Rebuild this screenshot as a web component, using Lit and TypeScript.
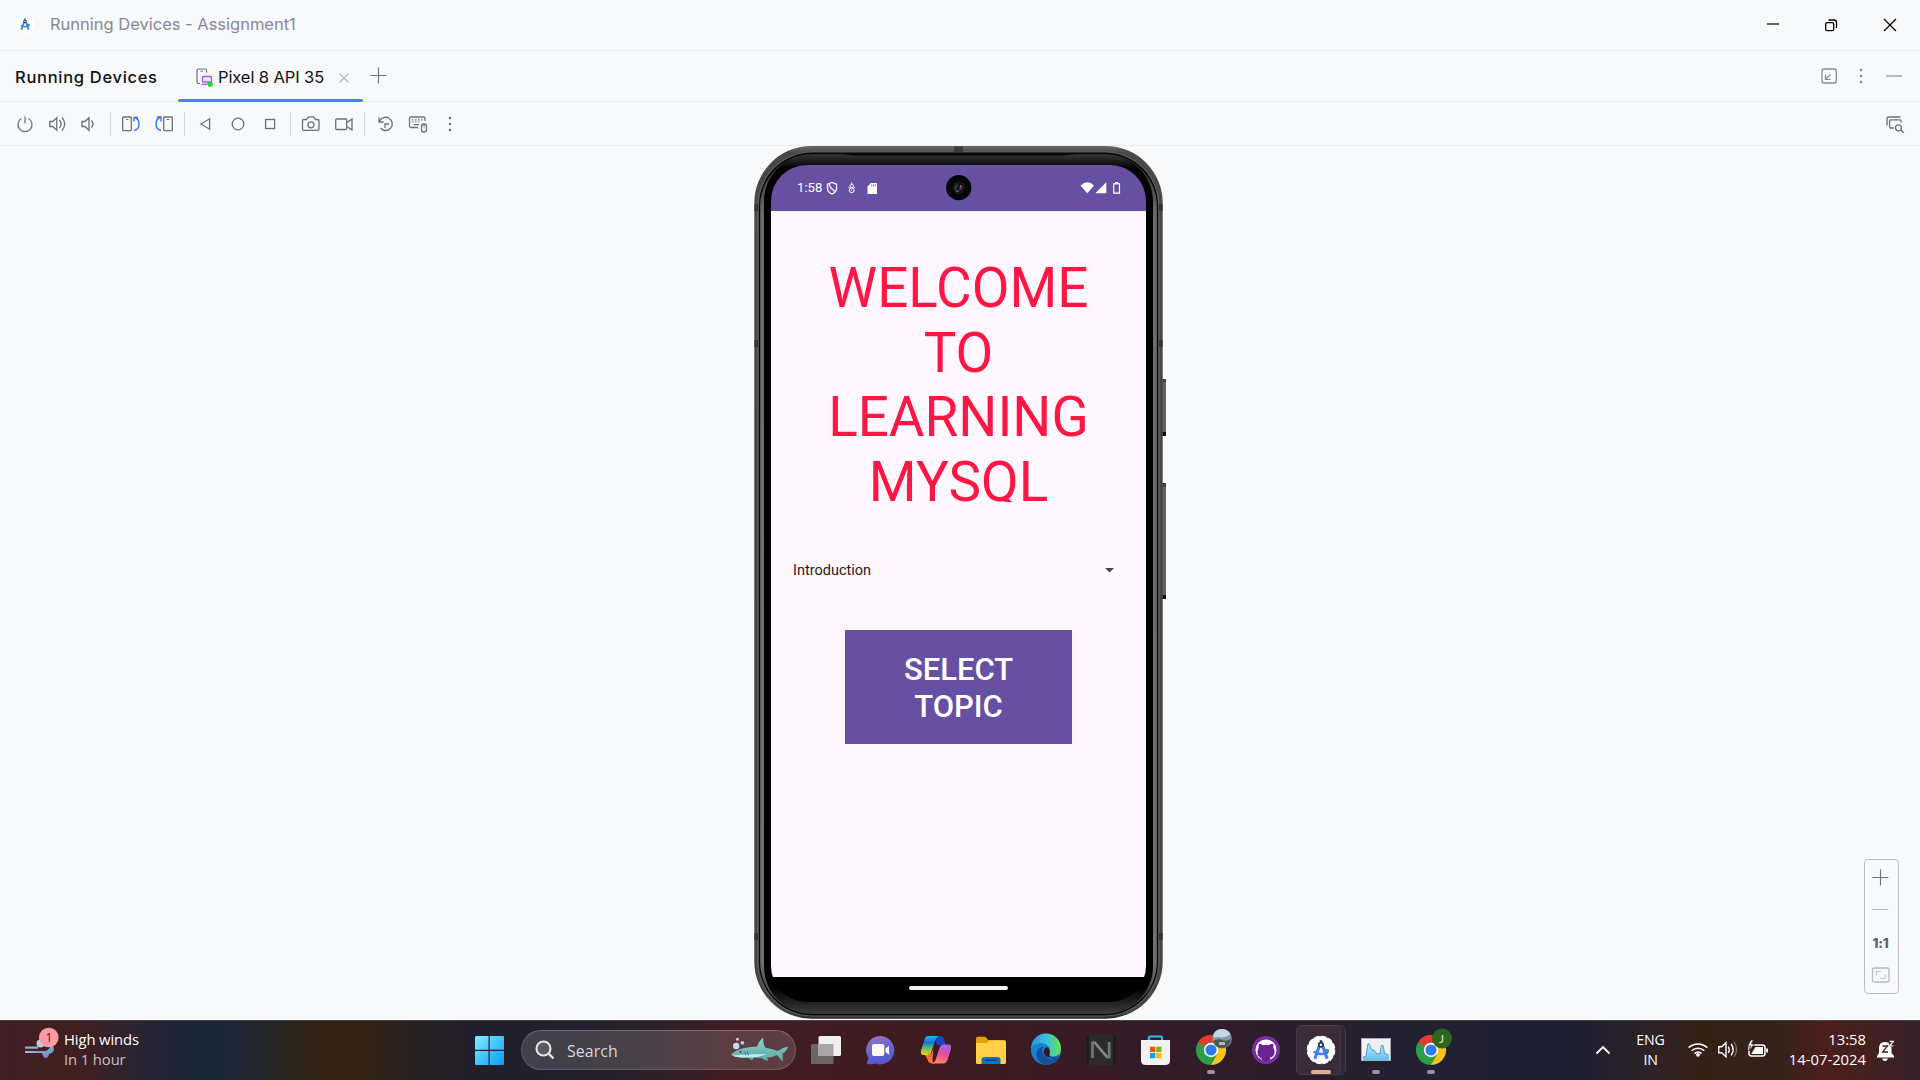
import { LitElement, html, svg, css } from "lit";
import { customElement } from "lit/decorators.js";

// Icons are drawn in window coordinates; each slot shows its own part of the window.
const art = (x: number, y: number, w: number, h: number, body: unknown) =>
  html`<svg class="art" width=${w} height=${h} viewBox="${x} ${y} ${w} ${h}" fill="none">${body}</svg>`;

const bar = (x: number, w: number, body: unknown) => art(x, 102, w, 43, body);
const task = (x: number, w: number, body: unknown) => art(x, 1020, w, 60, body);
const app = (x: number, w: number, body: unknown) => art(x, 1022, w, 60, body);

const studioMark = (cx: number, cy: number, k: number) => svg`
  <g transform="translate(${cx} ${cy}) scale(${k})">
    <path d="M2 -2 L8.5 -1 L7 3.500 L3 3Z" fill="#34a853"/>
    <path d="M-1.200 -6 L-6.300 8.500 M1.200 -6 L6.300 8.500" stroke="#3f82f5" stroke-width="3.200"/>
    <path d="M-7.500 1 Q0 6.200 7.500 1" stroke="#3f82f5" stroke-width="2.400"/>
    <path d="M-1.300 -10.500 h2.600 v2 h-2.600z" fill="#1d3a5c"/>
    <circle cx="0" cy="-5.800" r="2.200" fill="#fff" stroke="#1d3a5c" stroke-width="1.800"/>
  </g>`;

const chrome = (cx: number) => svg`
  <g transform="translate(${cx} 1052) scale(.94)">
    <path d="M0 0 L-13.860 -8 A16 16 0 0 1 13.860 -8Z" fill="#e33b2e"/>
    <path d="M0 0 L13.860 -8 A16 16 0 0 1 0 16Z" fill="#fcc31e"/>
    <path d="M0 0 L0 16 A16 16 0 0 1 -13.860 -8Z" fill="#2b9e47"/>
    <path d="M0 -8 H13.860 L6.900 4Z" fill="#fcc31e"/>
    <path d="M6.900 4 L0 16 L-2 7Z" fill="#2b9e47"/>
    <path d="M-6.900 4 L-13.860 -8 L-2 -7.500Z" fill="#2b9e47"/>
    <path d="M-13.860 -8 A16 16 0 0 1 13.860 -8 H0 A8 8 0 0 0 -7 -4Z" fill="#e33b2e"/>
    <circle r="7.600" fill="#fff"/><circle r="5.900" fill="#2f7bea"/>
  </g>`;

@customElement("phone-frame")
class PhoneFrame extends LitElement {
  static styles = css`
    :host { display: block; position: relative; width: 412px; height: 874px; font-family: Roboto, sans-serif; }
    .body { position: absolute; left: 0; top: 0; display: block; }
    .screen { position: relative; box-sizing: border-box; margin-left: 17px; width: 375px; height: 837px; top: 19px;
      border-radius: 36px; overflow: hidden; background: #000; display: flex; flex-direction: column; }
    .status { height: 46px; background: #6750a3; display: flex; flex: none; color: #fff; box-sizing: border-box; }
    .time { width: 52px; box-sizing: border-box; padding-left: 26px; font-size: 13.2px; line-height: 46px; white-space: nowrap; }
    .art { display: block; flex: none; }
    .content { height: 766px; flex: none; background: #fef7ff; display: flex; flex-direction: column; align-items: center; }
    .title { margin-top: 45px; height: 246px; overflow: hidden; color: #ff1744; font-size: 54.8px; line-height: 64.700px; text-align: center; flex: none; }
    .title span { display: block; }
    .spinner { margin-top: 48px; width: 375px; height: 40px; display: flex; align-items: center; justify-content: space-between;
      box-sizing: border-box; padding: 0 32px 0 22px; color: #1d1b20; font-size: 14.5px; flex: none; }
    .select { margin-top: 40px; width: 227px; height: 114px; background: #6750a3; color: #fff; font-weight: 500; font-size: 31px;
      line-height: 36.600px; text-align: center; padding: 22px 0 0; box-sizing: border-box; flex: none; }
    .select span { display: block; }
    .nav { flex: 1; display: flex; justify-content: center; padding-top: 9px; }
    .handle { width: 99px; height: 4px; border-radius: 2px; background: #f0f2ee; }
  `;
  render() {
    return html`
      <svg class="body" width="412" height="874" viewBox="754 146 412 874">
        <defs>
          <linearGradient id="rim" x1="0" y1="0" x2="0" y2="1"><stop offset="0" stop-color="#6a6b69"/><stop offset=".008" stop-color="#474847"/><stop offset=".99" stop-color="#454545"/><stop offset="1" stop-color="#2b2b2b"/></linearGradient>
          <linearGradient id="glass" x1="0" y1="0" x2="0" y2="1"><stop offset="0" stop-color="#353535"/><stop offset=".015" stop-color="#050505"/><stop offset=".06" stop-color="#000"/><stop offset=".97" stop-color="#000"/><stop offset="1" stop-color="#3b3b3b"/></linearGradient>
          <linearGradient id="edge" x1="0" y1="0" x2="0" y2="1"><stop offset="0" stop-color="#222"/><stop offset=".07" stop-color="#6c6c6c"/><stop offset=".94" stop-color="#707070"/><stop offset="1" stop-color="#333"/></linearGradient>
        </defs>
        <g fill="#626262"><rect x="1162" y="379" width="4" height="56"/><rect x="1162" y="483" width="4" height="115"/></g>
        <path d="M1162 432h4v4h-4zM1162 595h4v4h-4z" fill="#111"/><path d="M1162 379h4v3h-4zM1162 483h4v4h-4z" fill="#444"/>
        <rect x="754.300" y="146" width="408.400" height="872.700" rx="57" fill="url(#rim)"/>
        <rect x="757.800" y="152" width="401.400" height="864" rx="54" fill="none" stroke="#727272" stroke-width="1" opacity=".65"/>
        <rect x="759" y="152.600" width="399" height="862.600" rx="53" fill="#080808"/>
        <rect x="760.200" y="154" width="396.600" height="860" rx="52" fill="url(#edge)"/>
        <rect x="764" y="154.500" width="389" height="859" rx="47" fill="url(#glass)"/>
        <path d="M841 154.300H1077L1062 155.500H855Z" fill="#000"/>
        <path d="M954 146.500h9v5.500h-9z" fill="#3c3c3c"/>
        <g fill="#353535"><rect x="754.500" y="204" width="3.500" height="7"/><rect x="1159" y="204" width="3.500" height="7"/><rect x="754.500" y="340" width="3.500" height="7"/><rect x="1159" y="340" width="3.500" height="7"/><rect x="754.500" y="933" width="3.500" height="7"/><rect x="1159" y="933" width="3.500" height="7"/></g>
      </svg>
      <div class="screen">
        <div class="status">
          <div class="time">1:58</div>
          <svg class="art" width="323" height="46" viewBox="823 165 323 46" fill="none">
            <path d="M832 182.500 L827.500 184.200 V188.500 Q827.500 192 832 194 Q836.500 192 836.500 188.500 V184.200Z" stroke="#fff" stroke-width="1.300"/>
            <path d="M829.500 184 Q829.500 188 833 189.500 L834.500 191.500" stroke="#fff" stroke-width="1.300"/>
            <circle cx="851.700" cy="186" r="1.700" stroke="#fff" stroke-width="1"/><circle cx="851.700" cy="190.300" r="2.400" stroke="#fff" stroke-width="1"/><path d="M851.700 182.500v1.500M851.700 189.500v1.600M848.300 187.200l1.600 1M855.100 187.200l-1.600 1" stroke="#fff" stroke-width=".9"/>
            <path d="M871 183 H876.500 Q877 183 877 183.800 V193.500 Q877 194 876.300 194 H868.200 Q867.500 194 867.500 193.400 V186.500Z" fill="#fff"/><path d="M871.800 184.300v2M873.600 184.300v2M875.300 184.300v2" stroke="#6750a3" stroke-width=".8"/>
            <circle cx="958.700" cy="187.700" r="12.600" fill="#050505"/><circle cx="958.700" cy="187.700" r="6.500" fill="#141414"/>
            <path d="M954.500 190 a5 5 0 0 1 3.500 -6.500 l-1 4z" fill="#303c54"/><path d="M960 185 q3.500 1 2 4 l-3 1.500z" fill="#54384f"/><path d="M955.500 190.500l3 1" stroke="#5f8d95" stroke-width="1.300"/><path d="M960 185.600l1.300 1" stroke="#c6a5c6"/>
            <path d="M1080.600 185.500 Q1087.300 179 1094 185.500 L1087.300 193.200Z" fill="#fff"/>
            <path d="M1095.300 193.300 L1106.300 182.300 V193.300Z" fill="#fff"/>
            <path d="M1115 182h3v1.300h-3z" fill="#fff"/><rect x="1113.700" y="183.800" width="5.800" height="9.400" stroke="#fff" stroke-width="1.200"/><path d="M1114.500 192.300h4.200" stroke="#f2a6a0"/>
          </svg>
        </div>
        <div class="content">
          <div class="title"><span>WELCOME</span><span>TO</span><span>LEARNING</span><span>MYSQL</span></div>
          <div class="spinner"><span>Introduction</span><svg class="art" width="9" height="5" viewBox="0 0 9 5"><path d="M0 0h9L4.500 4.600z" fill="#49454f"/></svg></div>
          <div class="select"><span>SELECT</span><span>TOPIC</span></div>
        </div>
        <div class="nav"><div class="handle"></div></div>
      </div>`;
  }
}

@customElement("app-root")
class AppRoot extends LitElement {
  static styles = css`
    :host { display: flex; flex-direction: column; width: 1920px; height: 1080px; overflow: hidden; background: #f7f9fb;
      font-family: Inter, sans-serif; white-space: nowrap; }
    .art { display: block; flex: none; }
    .row { display: flex; flex: none; align-items: center; box-sizing: border-box; border-bottom: 1px solid #ebecf0; }
    .titlebar { height: 51px; }
    .caption { color: #878a99; font-size: 16.5px; letter-spacing: -.01px; line-height: 49px; height: 50px; }
    .grow { flex: 1; }
    .tabs { height: 51px; color: #111; font-size: 16.5px; }
    .heading { width: 178px; box-sizing: border-box; padding: 2px 0 0 15px; font-weight: 500; letter-spacing: .7px; }
    .tab { width: 185px; height: 51px; display: flex; align-items: center; position: relative; }
    .tab .underline { position: absolute; left: 0; right: 0; bottom: 0; height: 3px; border-radius: 2px; background: #4682fa; }
    .name { width: 112px; padding-top: 2px; letter-spacing: -.1px; }
    .tools { height: 44px; }
    .sep { width: 1px; height: 24px; background: #d6d7de; flex: none; }
    .stage { flex: 1; display: flex; min-height: 0; }
    .device { margin-left: 754px; flex: none; }
    .zoom { margin: 713px 21px 0 0; width: 35px; height: 135px; box-sizing: border-box; border: 1px solid #bcbdc4; border-radius: 4px;
      display: flex; flex-direction: column; align-items: center; }
    .ratio { font-size: 13.5px; font-weight: 800; color: #5f6065; height: 33px; line-height: 34px; letter-spacing: -.3px; padding-right: 2px; }
    .taskbar { height: 60px; flex: none; display: flex; color: #fff; font-family: "Open Sans", "Noto Sans", sans-serif; box-shadow: inset 0 1px #4c4346;
      background: linear-gradient(90deg, #3e1f22 0, #421f1f 75px, #2b2331 135px, #192539 190px, #1c2737 235px, #29251f 285px, #342215 325px, #332215 370px,
        #282022 410px, #211f2d 475px, #231f2c 580px, #2d2029 660px, #421c20 735px, #3e1b20 920px, #371b27 1120px, #2c1d2b 1270px, #222031 1420px,
        #1e1e31 1575px, #2b2229 1640px, #342115 1700px, #34211a 1770px, #4b1f1c 1825px, #42201f 1870px, #36212a 1920px); }
    .weather { width: 411px; padding-top: 9px; font-size: 14.8px; line-height: 20px; box-sizing: border-box; letter-spacing: -.1px; }
    .soft { color: #c9c0c1; }
    .search { margin: 10px 9px 0 8px; width: 275px; height: 40px; box-sizing: border-box; border-radius: 20px; flex: none;
      border: 1px solid #ffffff22; border-top-color: #ffffff38; background: #ffffff26; display: flex; align-items: center; color: #d9d5d8; }
    .hint { font-size: 15.9px; padding-top: 2px; letter-spacing: .1px; }
    .lang { width: 45px; text-align: center; font-size: 14.2px; line-height: 20px; padding: 10px 2px 0 0; letter-spacing: -.2px; box-sizing: border-box; }
    .clock { width: 94px; text-align: right; font-size: 14.8px; line-height: 20px; padding-top: 9px; }
    .clock div, .lang div, .weather div { height: 20px; }
    .badge { font: 12px Lato, sans-serif; fill: #dfe8da; }
    .count { font: 12px "Open Sans", sans-serif; fill: #3b1a20; }
  `;
  render() {
    const g = "#6c707e";
    const b = "#3574f0";
    const st = (d: string, c = g, w = 1.3) => svg`<path d=${d} stroke=${c} stroke-width=${w}/>`;
    return html`
      <div class="row titlebar">
        ${art(0, 0, 50, 50, svg`<circle cx="25" cy="24.500" r="9" fill="#fff"/>${studioMark(25, 24.7, 0.58)}`)}
        <div class="caption">Running Devices - Assignment1</div>
        <div class="grow"></div>
        ${art(1744, 0, 58, 50, st("M1767 24h12", "#000", 1.2))}
        ${art(1802, 0, 58, 50, svg`<rect x="1825.700" y="22.700" width="8" height="8" rx="1.500" stroke="#000" stroke-width="1.300"/>${st("M1828.500 20h5.500q2.500 0 2.500 2.500v5.500", "#000", 1.3)}`)}
        ${art(1860, 0, 60, 50, st("M1884 19l12 12M1896 19l-12 12", "#000", 1.2))}
      </div>
      <div class="row tabs">
        <div class="heading">Running Devices</div>
        <div class="tab">
          ${art(178, 51, 40, 50, svg`
            <path d="M200 83.500h-1.500q-1.500 0-1.500-1.500V70.500q0-1.500 1.500-1.500h6.500q1.500 0 1.500 1.500v2" stroke=${g} stroke-width="1.200"/><path d="M200.500 71.200h2.500" stroke=${g}/>
            <rect x="202.500" y="76.500" width="9" height="5.500" rx=".8" fill="#f3ebff" stroke="#9b5cf5" stroke-width="1.300"/><path d="M201.500 84.300h7" stroke="#9b5cf5" stroke-width="1.300"/><circle cx="210.200" cy="84.200" r="2.600" fill="#1fdc3c"/>`)}
          <div class="name">Pixel 8 API 35</div>
          ${art(330, 51, 33, 50, st("M339.500 73.500l9 9M348.500 73.500l-9 9", "#b3b6c3", 1.2))}
          <div class="underline"></div>
        </div>
        ${art(363, 51, 40, 50, st("M370.500 75.500h16M378.500 67.500v16", g, 1.1))}
        <div class="grow"></div>
        ${art(1810, 51, 35, 50, svg`<rect x="1822" y="69" width="14.300" height="14" rx="2" stroke="#868996" stroke-width="1.300"/>${st("M1825.500 74.500v5h5M1826 79l4.500-4.500", "#868996", 1.2)}`)}
        ${art(1845, 51, 30, 50, svg`<g fill="#7a7e8c"><circle cx="1861" cy="70" r="1.200"/><circle cx="1861" cy="76" r="1.200"/><circle cx="1861" cy="82" r="1.200"/></g>`)}
        ${art(1875, 51, 45, 50, st("M1886 76h16", "#a8abb6", 1.6))}
      </div>
      <div class="row tools">
        ${bar(0, 41, st("M21.500 118.500a7 7 0 1 0 7 0M25 116.500v7"))}
        ${bar(41, 34, st("M49.800 121.500h3l4-3.700v12.400l-4-3.700h-3zM59.500 120q3 4 0 8M62 117.500q5.500 6.500 0 13"))}
        ${bar(75, 35, st("M82 121.500h3l4-3.700v12.400l-4-3.700h-3zM91.300 120.500q3.500 3.500 0 7"))}
        <div class="sep"></div>
        ${bar(111, 37, svg`<rect x="122.700" y="117" width="8.600" height="13.700" rx=".8" stroke=${g} stroke-width="1.300"/>${st("M126 119.500h2.500", g, 1)}${st("M134 130.500q5-1 5-6.500 0-5-4-6.500M134 121.500v-4h4", b, 1.4)}`)}
        ${bar(148, 36, svg`<rect x="163.700" y="117" width="8.600" height="13.700" rx=".8" stroke=${g} stroke-width="1.300"/>${st("M166.700 119.500h2.500", g, 1)}${st("M161 130.500q-5-1-5-6.500 0-5 4-6.500M157 117h4v4.500", b, 1.4)}`)}
        <div class="sep"></div>
        ${bar(185, 36, st("M209.600 118.800v10.400l-8.600-5.200z"))}
        ${bar(221, 34, svg`<circle cx="238" cy="124" r="5.800" stroke=${g} stroke-width="1.300"/>`)}
        ${bar(255, 35, svg`<rect x="265.600" y="119.500" width="9" height="9" stroke=${g} stroke-width="1.300"/>`)}
        <div class="sep"></div>
        ${bar(291, 37, svg`<path d="M303.800 119.500h2.700l1.800-2.700h5.400l1.800 2.700h2.200q1.300 0 1.300 1.300v8.200q0 1.300-1.300 1.300h-13.900q-1.300 0-1.300-1.300v-8.200q0-1.300 1.300-1.300z" stroke=${g} stroke-width="1.300"/><circle cx="311" cy="124.800" r="3" stroke=${g} stroke-width="1.300"/>`)}
        ${bar(328, 36, svg`<rect x="335.700" y="119" width="11" height="10.500" rx="1" stroke=${g} stroke-width="1.300"/>${st("M347 122.500l5-3.500v11l-5-3.500", g, 1.3)}`)}
        <div class="sep"></div>
        ${bar(365, 38, st("M379 117.500v4.500h4.500M379.500 121.500a6.600 6.600 0 1 1 1 6.500M389 124h-4v4"))}
        ${bar(403, 35, svg`${st("M418 127.500h-7q-1.500 0-1.500-1.500v-7.500q0-1.500 1.500-1.500h12.500q1.500 0 1.500 1.500v2.500")}${st("M412 119.800h1.500M415 119.800h1.500M418 119.800h1.500M421 119.800h1.500M412 122h1.500M415 122h1.500M418 122h1.500M414 124.700h5", g, 1.2)}<rect x="421.500" y="124" width="5" height="8" rx="2.300" stroke=${g} stroke-width="1.300"/>${st("M424 124v3.500", g, 1)}`)}
        ${bar(438, 30, svg`<g fill=${g}><circle cx="450" cy="118" r="1.200"/><circle cx="450" cy="124" r="1.200"/><circle cx="450" cy="130" r="1.200"/></g>`)}
        <div class="grow"></div>
        ${bar(1875, 45, svg`${st("M1887 125.500v-7q0-1.500 1.500-1.500h12M1894 128h-3.500q-.9 0-.9-.9v-6.400q0-.9.9-.9h9.600q.9 0 .9.900v2")}<circle cx="1898.500" cy="127.800" r="3" stroke=${g} stroke-width="1.300"/>${st("M1900.700 130l3 2.800", g, 1.5)}`)}
      </div>
      <div class="stage">
        <phone-frame class="device"></phone-frame>
        <div class="grow"></div>
        <div class="zoom">
          ${art(1865, 860, 33, 34, st("M1872.300 877.500h16M1880.500 869.500v16", g, 1.1))}
          ${art(1865, 894, 33, 32, st("M1872.300 909.500h16", "#b9bbc2", 1.1))}
          <div class="ratio">1:1</div>
          ${art(1865, 959, 33, 33, svg`<rect x="1872.500" y="968" width="16.500" height="14" rx="1.500" stroke="#b9babf" stroke-width="1.300"/>${st("M1876.500 975.500v-4h4.500M1885 974.500v4h-4.500", "#c3c4c9", 1.2)}`)}
        </div>
      </div>
      <div class="taskbar">
        <svg class="art" width="64" height="60" viewBox="0 1020 64 60" fill="none">
          <defs>
            <linearGradient id="wind" x1="0" y1="0" x2="1" y2="1"><stop stop-color="#c4d9f0"/><stop offset="1" stop-color="#4f7fae"/></linearGradient>
          </defs>
          <path d="M25 1047.600h13" stroke="#8fb0d5" stroke-width="2.200"/><circle cx="40.500" cy="1043.500" r="4" fill="#b6cdea"/>
          <path d="M25 1053h17q1 5 4 5 3-1 3-4 5-1 5-5 0-3-3-3-3 5-6 5H25z" fill="url(#wind)"/><path d="M25 1050.500h20" stroke="#3a2730" stroke-width="1.200"/>
          <circle cx="48.800" cy="1037.500" r="9.800" fill="#ff99a4"/><text class="count" x="45.500" y="1042">1</text>
        </svg>
        <div class="weather"><div>High winds</div><div class="soft">In 1 hour</div></div>
        ${task(475, 38, svg`
          <defs><linearGradient id="w" gradientUnits="userSpaceOnUse" x1="475" y1="1036" x2="504" y2="1065"><stop stop-color="#7bf0ff"/><stop offset="1" stop-color="#0a9bf8"/></linearGradient></defs>
          <path d="M476 1036h12.500v13.700H475V1037zM489.700 1036H503q1 0 1 1v12.700h-14.300zM475 1051h13.500v14H476q-1 0-1-1zM489.700 1051H504v13q0 1-1 1h-13.300z" fill="url(#w)"/>`)}
        <div class="search">
          ${art(522, 1030, 45, 40, svg`<circle cx="543.500" cy="1048.500" r="7" stroke="#e6e3e6" stroke-width="2.100" fill="#ffffff22"/><path d="M548.700 1053.700l4.800 4.800" stroke="#e6e3e6" stroke-width="2.400"/>`)}
          <span class="hint">Search</span><div class="grow"></div>
          ${art(731, 1030, 64, 40, svg`
            <defs><linearGradient id="shark" x1="0" y1="0" x2="0" y2="1"><stop stop-color="#8fd0cf"/><stop offset=".6" stop-color="#6fb8b6"/><stop offset="1" stop-color="#5aa5a6"/></linearGradient></defs>
            <path d="M731 1054.500Q735 1050.500 742 1048.500 Q751 1046.500 757 1046.500 Q759 1041 763 1037.500 Q763 1043 765 1047.500 Q773 1049 778 1051 Q782 1047.500 788 1046.500 Q787 1051 782.500 1053.500 Q783 1058 782.500 1061.500 Q779 1057.500 777 1055 Q772 1057.500 767 1057.800 L768.500 1061 Q763.500 1060 761.500 1058 L754 1057.800 L752 1060.500 Q749.500 1058.500 747.500 1057.500 Q737 1058.500 731 1054.500Z" fill="url(#shark)"/>
            <path d="M732 1055.500 Q748 1054 766 1054 Q760 1057.500 748 1057.500 Q738 1058 732 1055.500Z" fill="#b9eeec"/><path d="M744.500 1051.500l1.500 4M747 1051l1.500 4.500" stroke="#2c7479" stroke-width=".8"/><circle cx="740.500" cy="1052" r="1" fill="#7a2b36"/>
            <circle cx="736.200" cy="1046" r="3.200" fill="#c7dcf8"/><circle cx="742.400" cy="1042.800" r="1.900" fill="#b7cff0"/><circle cx="737.400" cy="1039.300" r="1.500" fill="#b7d7ee"/>`)}
        </div>
        ${task(805, 50, svg`<rect x="811" y="1044" width="22.500" height="20" rx="1.500" fill="#6a6664"/><rect x="818.500" y="1036" width="22.500" height="20" rx="1.500" fill="#f0eeee"/><path d="M818.500 1044H833.500V1056H820q-1.500 0-1.500-1.500z" fill="#a9a6a7"/>`)}
        ${task(855, 55, svg`<defs><linearGradient id="chat" x1=".2" y1="0" x2=".5" y2="1"><stop stop-color="#9a6fc0"/><stop offset=".5" stop-color="#6666cf"/><stop offset="1" stop-color="#5058cf"/></linearGradient></defs>
          <path d="M880.700 1036a14.200 14.200 0 1 1-5.500 27.500Q871 1065 866.500 1063.800L868.500 1058A14.200 14.200 0 0 1 880.700 1036z" fill="url(#chat)"/><rect x="872" y="1044" width="12.300" height="12" rx="2" fill="#fff"/><path d="M885.500 1048.500l3.500-2.800v9l-3.500-2.800z" fill="#fff"/>`)}
        ${app(910, 55, svg`
          <defs>
            <linearGradient id="cpa" x1="0" y1="0" x2="0" y2="1"><stop stop-color="#1fb6e8"/><stop offset=".35" stop-color="#1a6fe0"/><stop offset=".6" stop-color="#52b96a"/><stop offset="1" stop-color="#f6d21c"/></linearGradient>
            <linearGradient id="cpb" x1=".6" y1="0" x2=".3" y2="1"><stop stop-color="#a95df0"/><stop offset=".5" stop-color="#ea4f9b"/><stop offset="1" stop-color="#ff8a53"/></linearGradient>
          </defs>
          <path d="M934 1038h6q3 0 4 3l2 6h-9z" fill="#1a43c4"/>
          <path d="M928 1038h11q-3 1-4 5l-3.500 10.500q-1 3.500-4 3.500h-4q-3.500 0-2.300-5l3-9.500q1-4.500 3.800-4.500z" fill="url(#cpa)"/>
          <path d="M943 1065.500h-11q3-1 4-5l3.500-10.500q1-3.500 4-3.500h5q3.500 0 2.300 5l-3 9.500q-1.300 4.500-4.800 4.500z" fill="url(#cpb)"/>
          <path d="M925 1057h3q3 0 4-3l1.500-3.500-1 10q-.5 4 2.500 5h-3q-3.500 0-4.500-4z" fill="#fa7044"/>`)}
        ${app(965, 55, svg`<path d="M976 1040.500q0-1.700 1.700-1.700h7.600l3 3.200H1004q2 0 2 2v5h-30z" fill="#e2a20b"/><path d="M976 1045h10.500l2.500-2.500h15.500q1.500 0 1.500 1.500V1064.500q0 1.500-1.500 1.500h-27q-1.500 0-1.500-1.500z" fill="#ffd148"/><path d="M981.500 1066v-4q0-3 3-3h13q3 0 3 3v4z" fill="#1070bd"/><path d="M985 1062h12" stroke="#0a4574" stroke-width="1.500"/>`)}
        ${app(1020, 55, svg`
          <defs><linearGradient id="eg" x1="0" y1=".3" x2="1" y2=".3"><stop stop-color="#2397dc"/><stop offset=".5" stop-color="#35c1e0"/><stop offset="1" stop-color="#6be04c"/></linearGradient></defs>
          <circle cx="1046" cy="1052" r="15" fill="#1b7fd0"/>
          <path d="M1031 1051A15 15 0 0 1 1061 1050Q1061.500 1058 1053 1058.500 Q1048 1058.500 1049.500 1055Q1051 1047 1043 1045Q1034 1044.500 1031 1051z" fill="url(#eg)"/>
          <path d="M1049.300 1055.500Q1048 1058.800 1053 1059Q1057 1059 1059.500 1057.500Q1055 1067 1045 1067Q1036 1064 1036.500 1055Q1038 1049 1044 1048.500Q1040 1053 1044 1057Q1047 1060.500 1052 1062" fill="#14509a"/>
          <path d="M1049.600 1055.500Q1048 1058.500 1052 1059.500Q1045 1060 1043.500 1054Q1044 1050 1047 1049Q1051 1051.500 1049.600 1055.500z" fill="#32182a"/>`)}
        ${app(1075, 55, svg`<rect x="1086" y="1037" width="30" height="30" rx="4" fill="#1c1c1d"/><rect x="1089" y="1037" width="24" height="30" fill="#2a2b2b"/><path d="M1092.500 1060v-15h2.500l12 14h2.200v-15" stroke="#737373" stroke-width="2.800"/><path d="M1094 1043.500l13 15.500" stroke="#a0a0a0" stroke-width="1"/>`)}
        ${app(1130, 55, svg`<path d="M1149 1043.500v-4q0-1 1-1h11q1 0 1 1v4" stroke="#2bb7ea" stroke-width="2.200"/><path d="M1141 1042h29v20.500q0 4.500-5 4.500h-19q-5 0-5-4.500z" fill="#f2f2f3"/><path d="M1150 1048.700h5.300v5.300h-5.300z" fill="#f25022"/><path d="M1156.200 1048.700h5.300v5.300h-5.300z" fill="#7fba00"/><path d="M1150 1055h5.300v5.300h-5.300z" fill="#00a4ef"/><path d="M1156.200 1055h5.300v5.300h-5.300z" fill="#ffb900"/>`)}
        ${app(1185, 55, svg`${chrome(1211)}
          <circle cx="1222" cy="1040.700" r="9.800" fill="#8496a5"/><path d="M1213.500 1036a9.800 9.800 0 0 1 17 0q-5 4-9 3.500-5-1-8 .5z" fill="#c3d6e6"/><path d="M1213 1043q5-3 9-1t9-1q-1 9-9 9.300-7-.8-9-7.300z" fill="#4c5752"/><path d="M1219 1044h6v3h-6z" fill="#aab3b5"/><rect x="1207" y="1072" width="8" height="4" rx="2" fill="#9c96a0"/>`)}
        ${app(1240, 55, svg`<circle cx="1266" cy="1052" r="14" fill="#7b2da3"/><circle cx="1266" cy="1052" r="10.500" fill="#fff"/><path d="M1261.800 1062v-2.600q-4-.8-4.300-5-.1-3 1.300-4.700-.7-2 .3-4 2.300 0 4 1.500 2.900-.7 5.800 0 1.700-1.500 4-1.500 1 2 .3 4 1.400 1.700 1.300 4.700-.3 4.200-4.300 5v3.100q-4 1.600-8.400-.5z" fill="#6b2393"/><path d="M1257.500 1057q2 .3 2.800 2t2.500 1.200" stroke="#6b2393" stroke-width="1.100"/>`)}
        ${app(1295, 55, svg`<rect x="1330" y="1027.500" width="15.500" height="49" rx="5" fill="#ffffff0c" stroke="#ffffff18"/><rect x="1296.500" y="1027.500" width="43.500" height="49" rx="5" fill="#3a2c39" stroke="#4b3d49"/><circle cx="1321" cy="1052" r="13.700" fill="#fff"/><circle cx="1321" cy="1052" r="13.700" stroke="#fff" stroke-width="1.200" stroke-dasharray="5 2.170"/>${studioMark(1321, 1052.5, 0.98)}<rect x="1311" y="1072" width="20" height="4" rx="2" fill="#dcae98"/>`)}
        ${app(1350, 55, svg`<defs><linearGradient id="perf" x1="0" y1="0" x2="0" y2="1"><stop stop-color="#c9e8f8"/><stop offset="1" stop-color="#5fc3f3"/></linearGradient></defs><rect x="1361.500" y="1040.500" width="29" height="22" fill="#f1f1f3" stroke="#a9adb5"/><path d="M1363 1062V1059l3-1 2-13 1.500 1 2 5 3 1.500 2 3 3.500.500 1.500-8 2 0 1.500 8 4 1V1062z" fill="url(#perf)"/><path d="M1362.500 1059.500l3.500-1.500 2-12.500 1.500 1 2 5 3 1 2 3 3.500.500 1.300-8.500h1.700l1.600 8 4 1" stroke="#4b9bd0" stroke-width="1"/><rect x="1372" y="1072" width="8" height="4" rx="2" fill="#9690a0"/>`)}
        ${app(1405, 55, svg`${chrome(1431)}<circle cx="1442" cy="1040.500" r="10" fill="#2e661f"/><text class="badge" x="1439" y="1045">J</text><rect x="1427" y="1072" width="8" height="4" rx="2" fill="#96909d"/>`)}
        <div class="grow"></div>
        ${task(1586, 43, st("M1596.500 1053.500l6.500-6.500 6.500 6.500", "#fff", 1.8))}
        <div class="lang"><div>ENG</div><div>IN</div></div>
        ${task(1674, 38, svg`${st("M1688.700 1047.700a13.400 13.400 0 0 1 18.600 0M1691.700 1050.800a9 9 0 0 1 12.600 0M1694.500 1053.600a5 5 0 0 1 7 0", "#fff", 1.6)}<circle cx="1698" cy="1054.800" r="1.900" fill="#fff"/>`)}
        ${task(1712, 30, svg`${st("M1718.700 1046.700h3l4.300-4v14l-4.300-4h-3z", "#fff", 1.4)}${st("M1728.300 1046.500q2 3.200 0 6.500M1731.200 1044q3.800 5.700 0 11.400", "#fff", 1.4)}${st("M1734 1042q5 7.500 0 15", "#7a6b64", 1.3)}`)}
        ${task(1742, 30, svg`<rect x="1749" y="1045" width="16" height="11" rx="2.500" stroke="#fff" stroke-width="1.500"/><path d="M1751.500 1053.500l4-6.500h7.500v7h-11.500z" fill="#fff"/><path d="M1767 1048.500v4" stroke="#fff" stroke-width="1.800"/><path d="M1751 1040l-3.500 6h3l-1.500 5 5.500-7h-3l2-4z" fill="#fff" stroke="#34211a" stroke-width=".8"/>`)}
        <div class="clock"><div>13:58</div><div>14-07-2024</div></div>
        ${task(1866, 54, svg`<path d="M1877 1057.500v-1.500l2-3v-5q0-6 6-6 6.500 0 6.500 6v5l2.500 3v1.500z" fill="#fff"/><path d="M1882 1058.500h6q-.8 2.500-3 2.500t-3-2.500z" fill="#fff"/><path d="M1882.500 1046h5l-5 6h5.500" stroke="#42201f" stroke-width="1.300"/><path d="M1888.500 1040.500h6v6h-5z" fill="#42201f"/><path d="M1889.500 1041.300h3.800l-3.800 4.700h4" stroke="#fff" stroke-width="1.200"/>`)}
      </div>`;
  }
}
